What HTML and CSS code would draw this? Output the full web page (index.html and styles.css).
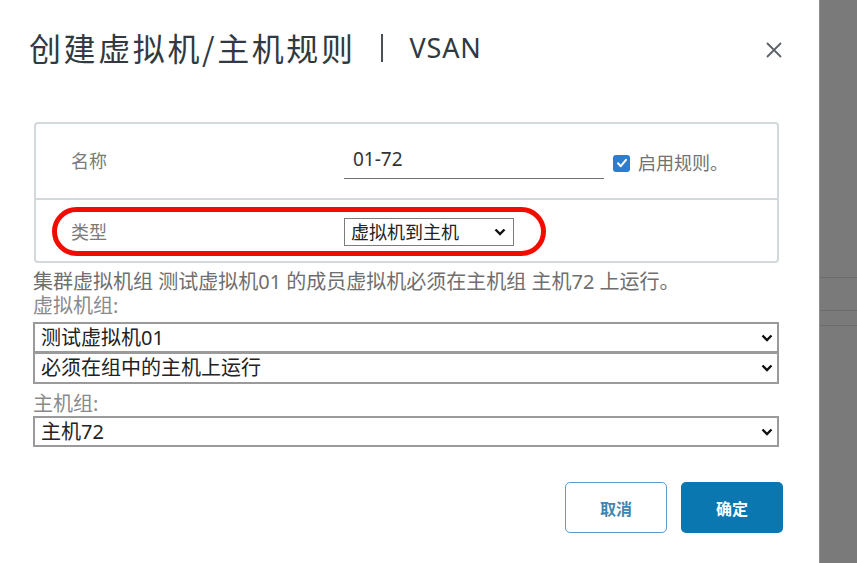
FILE: index.html
```html
<!DOCTYPE html>
<html lang="zh-CN">
<head>
    <meta charset="UTF-8">
    <title>创建虚拟机/主机规则</title>
    <link rel="stylesheet" href="styles.css">
</head>
<body>
    <div class="page">
        <div class="dialog">
            <div class="dialog-header">
                <h1 class="title">创建虚拟机/主机规则</h1>
                <span class="title-sep"></span>
                <span class="subtitle">VSAN</span>
                <button class="close" aria-label="关闭">
                    <svg width="18" height="18" viewBox="0 0 18 18">
                        <path d="M2 2 L16 16 M16 2 L2 16" stroke="#5b6166" stroke-width="1.8" fill="none"/>
                    </svg>
                </button>
            </div>

            <div class="rule-card">
                <div class="card-row row-name">
                    <label class="row-label">名称</label>
                    <div class="row-control">
                        <div class="text-input">01-72</div>
                        <span class="checkbox">
                            <svg width="12" height="12" viewBox="0 0 12 12">
                                <path d="M2 6.3 L4.8 9.2 L10 2.8" stroke="#fff" stroke-width="2" fill="none" stroke-linecap="round" stroke-linejoin="round"/>
                            </svg>
                        </span>
                        <span class="check-label">启用规则。</span>
                    </div>
                </div>
                <div class="card-row row-type">
                    <label class="row-label">类型</label>
                    <div class="row-control">
                        <div class="select select-small">
                            <span>虚拟机到主机</span>
                            <svg class="chev" width="12" height="8" viewBox="0 0 12 8"><path d="M1.5 1.5 L6 6 L10.5 1.5" stroke="#111" stroke-width="2.4" fill="none"/></svg>
                        </div>
                    </div>
                    <span class="highlight"></span>
                </div>
            </div>

            <p class="description">集群虚拟机组 测试虚拟机01 的成员虚拟机必须在主机组 主机72 上运行。</p>

            <div class="field-label">虚拟机组:</div>
            <div class="select select-wide">
                <span>测试虚拟机01</span>
                <svg class="chev" width="12" height="8" viewBox="0 0 12 8"><path d="M1.5 1.5 L6 6 L10.5 1.5" stroke="#111" stroke-width="2.4" fill="none"/></svg>
            </div>
            <div class="select select-wide">
                <span>必须在组中的主机上运行</span>
                <svg class="chev" width="12" height="8" viewBox="0 0 12 8"><path d="M1.5 1.5 L6 6 L10.5 1.5" stroke="#111" stroke-width="2.4" fill="none"/></svg>
            </div>

            <div class="field-label field-label-gap">主机组:</div>
            <div class="select select-wide">
                <span>主机72</span>
                <svg class="chev" width="12" height="8" viewBox="0 0 12 8"><path d="M1.5 1.5 L6 6 L10.5 1.5" stroke="#111" stroke-width="2.4" fill="none"/></svg>
            </div>

            <div class="dialog-footer">
                <button class="btn btn-outline">取消</button>
                <button class="btn btn-primary">确定</button>
            </div>
        </div>
        <div class="backdrop">
            <span class="backdrop-line line-a"></span>
            <span class="backdrop-line line-b"></span>
            <span class="backdrop-line line-c"></span>
        </div>
    </div>
</body>
</html>
```

FILE: styles.css
```css
* {
    margin: 0;
    padding: 0;
    box-sizing: border-box;
}

body {
    font-family: "Noto Sans", "Noto Sans CJK SC", sans-serif;
    background: #7a7a7a;
    width: 857px;
    height: 563px;
    overflow: hidden;
}

.page {
    display: flex;
    height: 563px;
}

.dialog {
    width: 819px;
    background: #fff;
    padding: 0 40px 0 33px;
}

/* header */
.dialog-header {
    display: flex;
    align-items: center;
    height: 98px;
    margin-left: -4px;
    padding-bottom: 4px;
}

.title {
    font-family: "Noto Sans CJK SC", sans-serif;
    font-size: 32px;
    font-weight: 400;
    letter-spacing: 2.6px;
    color: #313a40;
    line-height: 40px;
}

.title-sep {
    width: 2px;
    height: 28px;
    background: #4a5156;
    margin: 2px 27px 0 25px;
}

.subtitle {
    font-size: 27px;
    color: #313a40;
    letter-spacing: 0.8px;
    margin-top: 1px;
}

.close {
    margin-left: auto;
    margin-right: -4px;
    margin-top: 6px;
    background: none;
    border: none;
    display: flex;
}

/* rule card */
.rule-card {
    margin: 24px 0 0 1px;
    border: 2px solid #d3d8db;
    border-radius: 4px;
}

.card-row {
    position: relative;
    display: flex;
    align-items: center;
    padding-left: 35px;
}

.row-name {
    height: 76px;
    border-bottom: 2px solid #d3d8db;
}

.row-type {
    height: 61px;
}

.row-label {
    width: 273px;
    font-size: 18px;
    color: #7a7a7a;
    line-height: 24px;
}

.row-type .row-label {
    margin-top: 2px;
}

.row-control {
    display: flex;
    align-items: center;
}

.text-input {
    width: 260px;
    height: 34px;
    padding: 0 0 0 9px;
    margin-top: 1px;
    border-bottom: 1.5px solid #6d7378;
    font-size: 19px;
    line-height: 28px;
    color: #333;
}

.checkbox {
    width: 17px;
    height: 17px;
    margin: 4px 0 0 9px;
    border-radius: 3px;
    background: #2b7dd0;
    display: flex;
    align-items: center;
    justify-content: center;
}

.check-label {
    margin: 4px 0 0 8px;
    font-size: 18px;
    color: #727272;
    line-height: 24px;
}

.highlight {
    position: absolute;
    left: 16px;
    top: 7px;
    width: 494px;
    height: 49px;
    border: 5px solid #f20c00;
    border-radius: 25px;
    pointer-events: none;
}

/* selects */
.select {
    display: flex;
    align-items: center;
    justify-content: space-between;
    background: #fff;
    color: #222;
    line-height: 24px;
}

.select-small {
    width: 170px;
    height: 28px;
    margin-top: 3px;
    padding: 0 7px 0 6px;
    border: 1px solid #7c7c7c;
    font-size: 18px;
}

.select-wide {
    width: 746px;
    height: 31px;
    padding: 0 4px 0 6px;
    border: 2px solid #9a9a9a;
    font-size: 20px;
}

.select-wide + .select-wide {
    border-top-width: 1px;
}

/* helper text */
.description {
    margin-top: 7px;
    font-size: 20px;
    color: #6e6e6e;
    line-height: 24px;
    white-space: nowrap;
}

.field-label {
    font-size: 20px;
    color: #8a8a8a;
    line-height: 24px;
    margin-bottom: 4px;
}

.field-label-gap {
    margin-top: 8px;
    margin-bottom: 0;
}

/* footer */
.dialog-footer {
    display: flex;
    justify-content: flex-end;
    gap: 14px;
    margin: 35px -4px 0 0;
}

.btn {
    width: 102px;
    height: 51px;
    border-radius: 5px;
    font-family: "Noto Sans CJK SC", sans-serif;
    font-size: 16px;
    font-weight: 700;
    cursor: pointer;
}

.btn-outline {
    background: #fff;
    color: #3d86b2;
    border: 1.5px solid #5b9dc6;
}

.btn-primary {
    background: #0a77b0;
    color: #fff;
    border: none;
}

/* dimmed page behind the dialog */
.backdrop {
    flex: 1;
    position: relative;
    background: #7a7a7a;
    border-left: 1px solid #8c8c8c;
}

.backdrop-line {
    position: absolute;
    left: 0;
    right: 0;
    height: 1px;
    background: #6b6b6b;
}

.line-a { top: 277px; }
.line-b { top: 310px; }
.line-c { top: 325px; }
```
